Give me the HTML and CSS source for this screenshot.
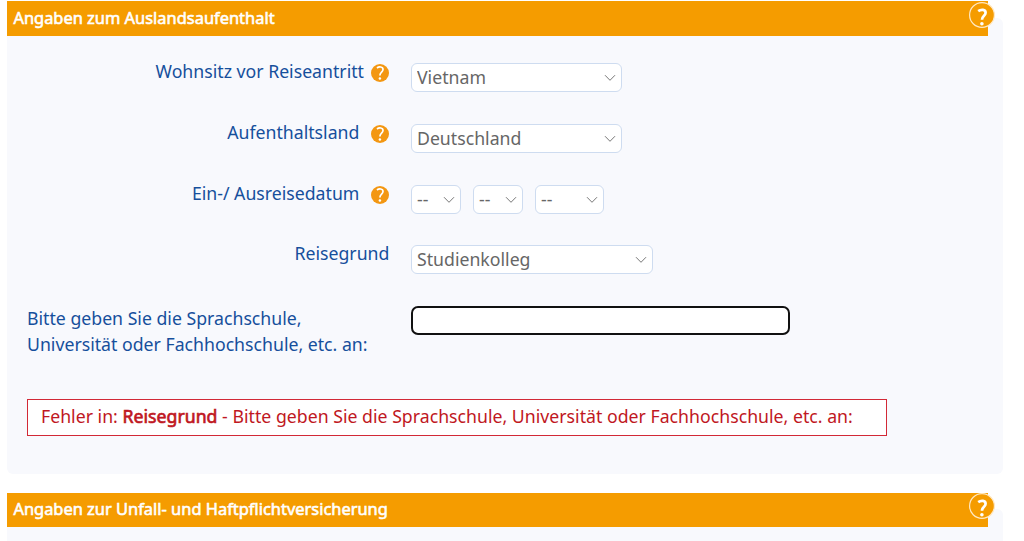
FILE: index.html
```html
<!DOCTYPE html>
<html lang="de">
<head>
<meta charset="utf-8">
<title>Angaben zum Auslandsaufenthalt</title>
<link rel="stylesheet" href="styles.css">
</head>
<body>
<svg class="sprite" aria-hidden="true">
  <symbol id="chevron" viewBox="0 0 12 8"><path d="M1 1.2L6 6.3L11 1.2" fill="none" stroke="#777" stroke-width="1"/></symbol>
  <symbol id="help" viewBox="0 0 18 18"><circle cx="9" cy="9" r="9" fill="#f39712"/><path d="M6 4C8 2.3 12 2.5 12 5.5C12 8.1 8.9 8.2 8.9 11.4" fill="none" stroke="#fff" stroke-width="1.7"/><circle cx="8.9" cy="14.6" r="1.25" fill="#fff"/></symbol>
  <symbol id="help-large" viewBox="0 0 26 26"><circle cx="13" cy="13" r="12.4" fill="#f59c00" stroke="#ffe9c4" stroke-width="1.2"/><path d="M9.2 9.2C12 7.1 16.6 7.3 16.6 10.7C16.6 13.8 13 13.7 13 17.8" fill="none" stroke="#fff" stroke-width="2.7"/><circle cx="12.9" cy="21.7" r="1.8" fill="#fff"/></symbol>
</svg>
<main class="page">
  <section class="section">
    <header class="section-head">
      <h2 class="title">Angaben zum Auslandsaufenthalt</h2>
      <svg class="head-help"><use href="#help-large"/></svg>
    </header>
    <form class="panel">
      <div class="row">
        <label class="label label-near">Wohnsitz vor Reiseantritt</label><svg class="help"><use href="#help"/></svg>
        <div class="fields"><div class="select w-country"><select class="control"><option>Vietnam</option></select><svg class="arrow"><use href="#chevron"/></svg></div></div>
      </div>
      <div class="row">
        <label class="label">Aufenthaltsland</label><svg class="help"><use href="#help"/></svg>
        <div class="fields"><div class="select w-country"><select class="control"><option>Deutschland</option></select><svg class="arrow"><use href="#chevron"/></svg></div></div>
      </div>
      <div class="row">
        <label class="label label-date">Ein-/ Ausreisedatum</label><svg class="help"><use href="#help"/></svg>
        <div class="fields">
          <div class="select w-day"><select class="control"><option>--</option></select><svg class="arrow"><use href="#chevron"/></svg></div>
          <div class="select w-day"><select class="control"><option>--</option></select><svg class="arrow"><use href="#chevron"/></svg></div>
          <div class="select w-year"><select class="control"><option>--</option></select><svg class="arrow"><use href="#chevron"/></svg></div>
        </div>
      </div>
      <div class="row">
        <label class="label label-wide">Reisegrund</label>
        <div class="fields"><div class="select w-reason"><select class="control"><option>Studienkolleg</option></select><svg class="arrow"><use href="#chevron"/></svg></div></div>
      </div>
      <div class="school">
        <label class="school-label" for="school">Bitte geben Sie die Sprachschule,<br>Universität oder Fachhochschule, etc. an:</label>
        <input class="school-input" id="school" type="text">
      </div>
      <p class="error">Fehler in: <span class="error-name">Reisegrund</span> - Bitte geben Sie die Sprachschule, Universität oder Fachhochschule, etc. an:</p>
    </form>
  </section>
  <section class="section">
    <header class="section-head">
      <h2 class="title">Angaben zur Unfall- und Haftpflichtversicherung</h2>
      <svg class="head-help"><use href="#help-large"/></svg>
    </header>
    <div class="panel"></div>
  </section>
</main>
</body>
</html>
```
FILE: styles.css
```css
* { box-sizing: border-box; }
body { margin: 0; background: #fff; font-family: "Noto Sans", sans-serif; font-size: 17.7px; overflow: hidden; }
.sprite { position: absolute; width: 0; height: 0; }
.page { height: 541px; padding: 1.4px 21px 0 7px; overflow: hidden; }
.section { margin-bottom: 19px; }
.section-head { position: relative; z-index: 1; display: flex; align-items: center; width: 981px; height: 34.3px; padding-left: 6.4px; background: #f59c00; }
.title { margin: -2px 0 0; color: #fff; font-size: 16.43px; font-weight: 400; line-height: 32px; white-space: nowrap; -webkit-text-stroke: .6px #fff; }
.head-help { position: absolute; top: .6px; right: -7px; width: 26px; height: 26px; }
.panel { width: 996px; height: 456px; margin-top: -18px; padding-top: 39.4px; background: #f8f9fd; border-radius: 6px; }
.row { display: flex; height: 60.7px; color: #164f9c; }
.label { width: 352.4px; line-height: 29px; text-align: right; white-space: nowrap; }
.label-near { width: 357px; }
.label-date { line-height: 30px; }
.label-wide { width: 382.4px; }
.help { flex: none; width: 18px; height: 18px; margin: 7.2px 0 0 11.6px; }
.label-near + .help { margin-left: 7px; }
.fields { display: flex; gap: 12px; margin: 6.3px 0 0 22px; height: 29px; }
.label-wide + .fields { margin-left: 21.6px; }
.select { position: relative; }
.control { display: block; width: 100%; height: 29px; padding: 0 5px 1px; border: 1px solid #cedcf0; border-radius: 6px; background: #fff; color: #666; font: inherit; appearance: none; }
.arrow { position: absolute; right: 6px; top: 11px; width: 12px; height: 8px; pointer-events: none; }
.w-country { width: 211px; }
.w-day { width: 50px; }
.w-year { width: 69px; }
.w-reason { width: 242px; }
.school { display: flex; align-items: flex-start; padding-left: 20px; color: #164f9c; }
.school-label { width: 384px; margin-top: 5px; line-height: 26.6px; white-space: nowrap; }
.school-input { width: 379px; height: 29px; margin-top: 6px; border: 2.5px solid #111; border-radius: 7px; background: #fff; outline: none; }
.error { width: 860px; height: 37px; margin: 40.7px 0 0 20px; padding-left: 13px; border: 1px solid #d22936; background: #fff; color: #c01722; line-height: 33px; letter-spacing: .01px; white-space: nowrap; }
.error-name { -webkit-text-stroke: .65px #c01722; }
```
